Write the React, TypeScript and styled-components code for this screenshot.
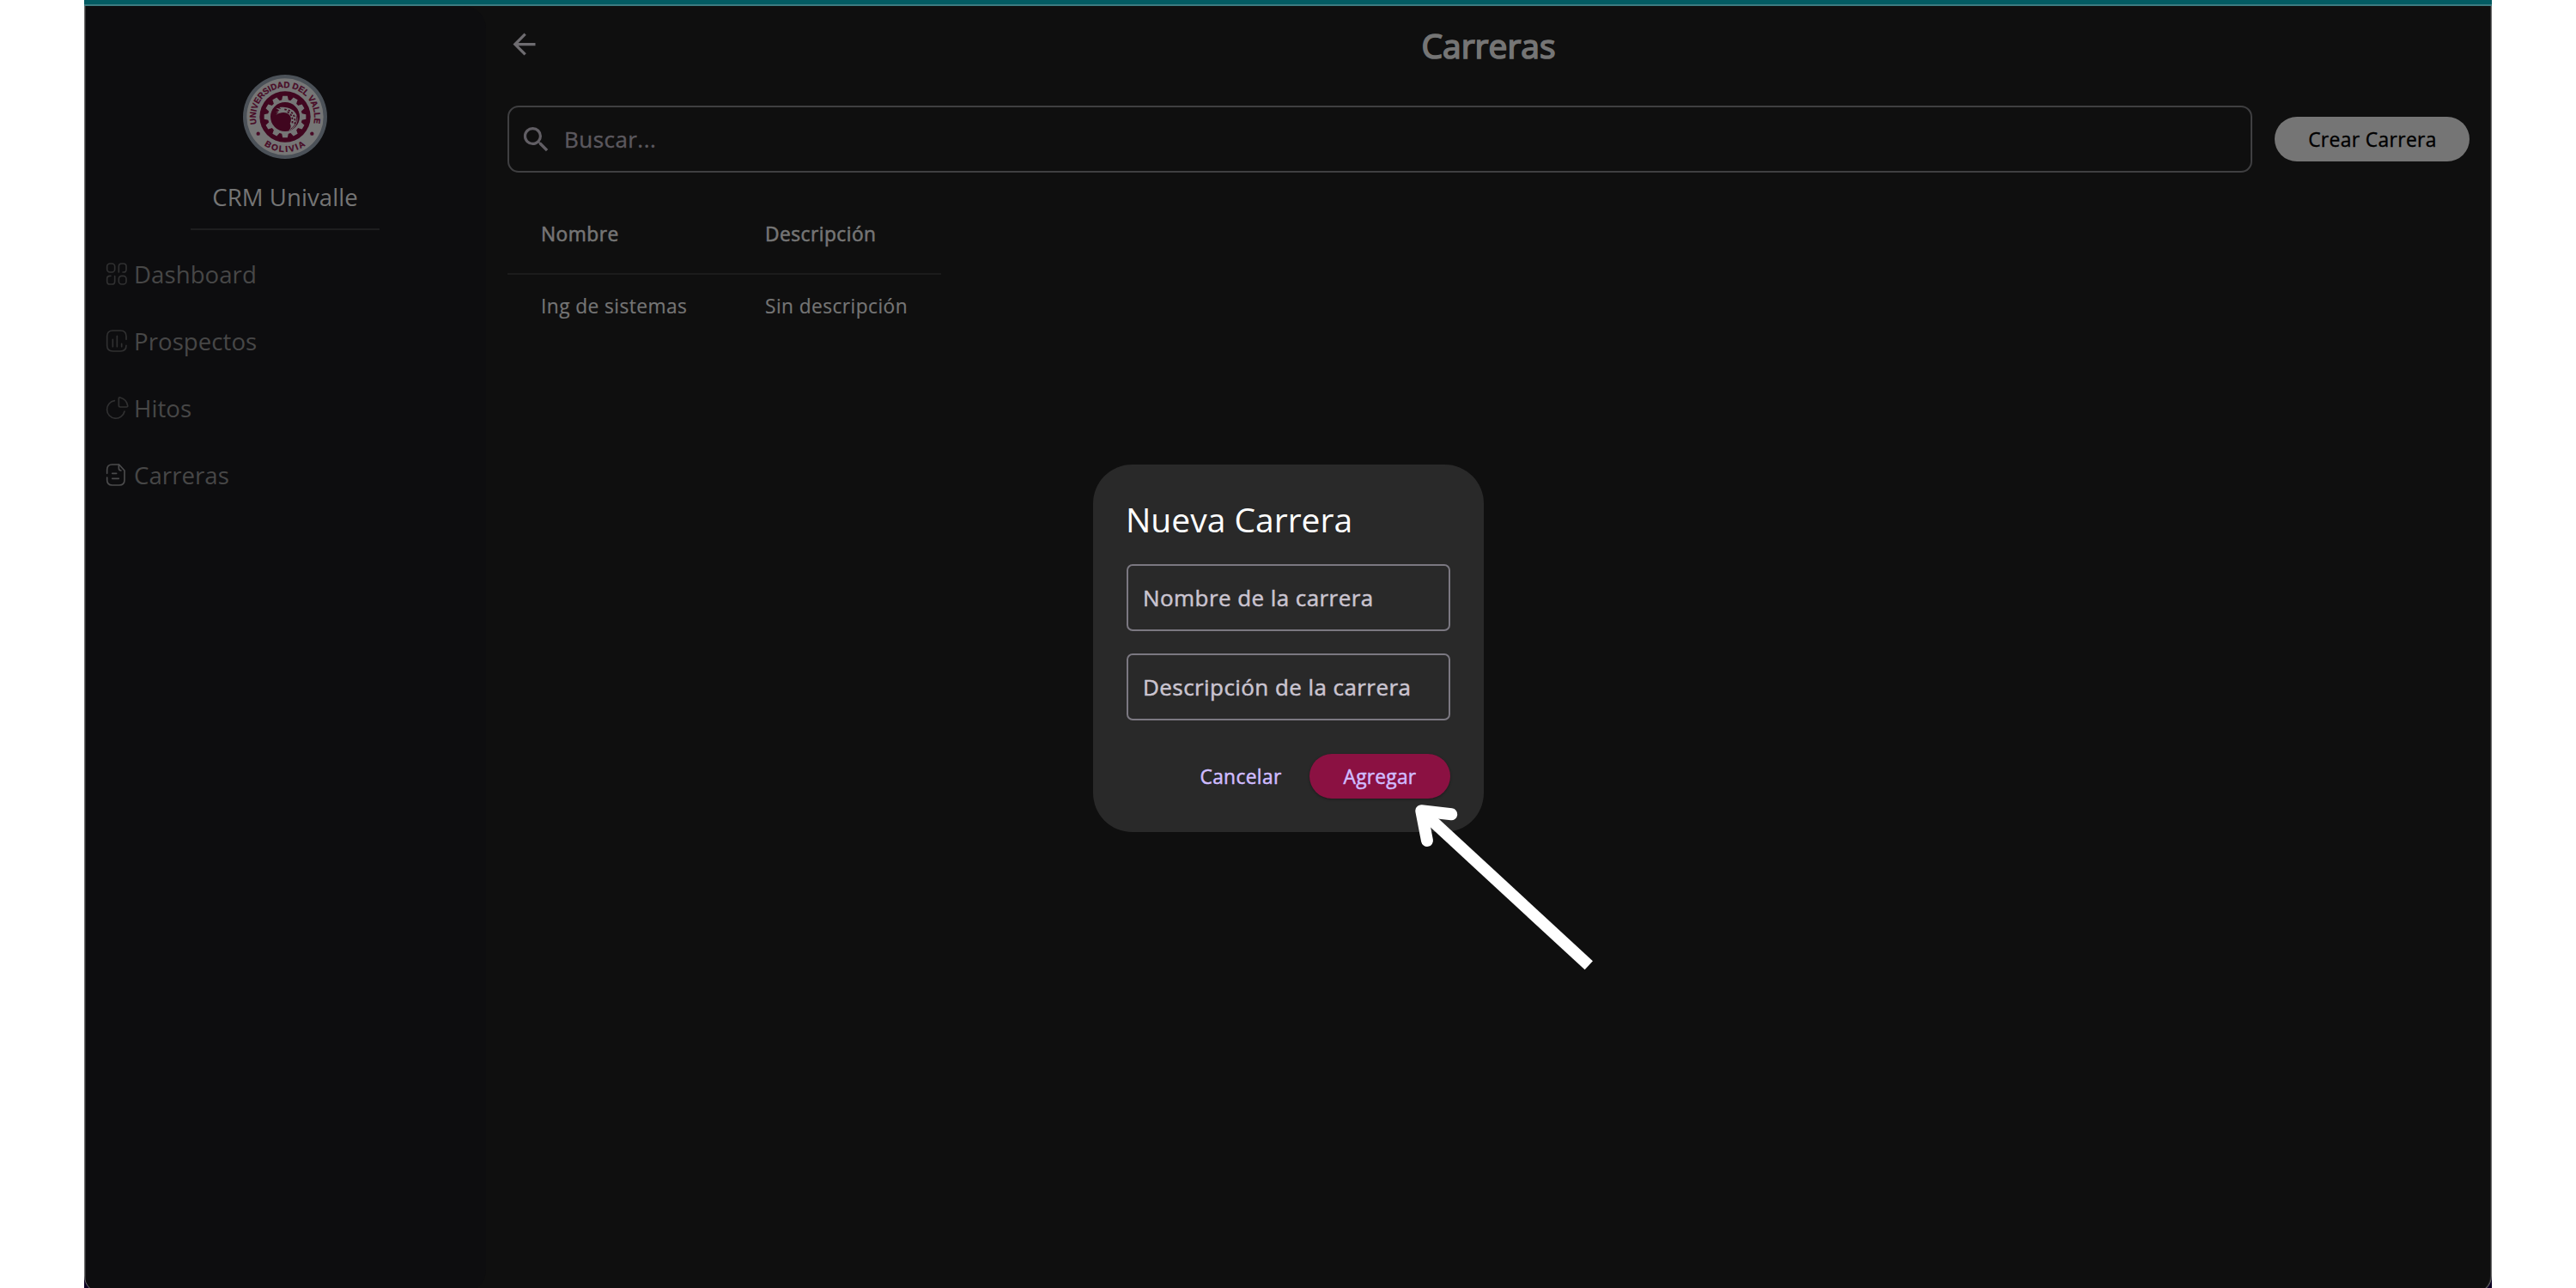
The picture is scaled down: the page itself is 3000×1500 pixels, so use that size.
import React from 'react';
import styled, { createGlobalStyle } from 'styled-components';

const GlobalStyle = createGlobalStyle`
  * { box-sizing: border-box; }
  body {
    margin: 0;
    background: #ffffff;
    font-family: "Open Sans", "Noto Sans", sans-serif;
  }
`;

const Screen = styled.div`
  position: relative;
  width: 3000px;
  height: 1500px;
  padding: 0 98px;
  overflow: hidden;
  background: #ffffff;
`;

const Desktop = styled.div`
  height: 1500px;
  display: flex;
  flex-direction: column;
  overflow: hidden;
  background: #0b0022;
`;

const TopStrip = styled.div`
  flex: none;
  height: 7px;
  background: #035b62;
  border-bottom: 2px solid #3c7c81;
`;

const AppWindow = styled.div`
  flex: none;
  height: 1499px;
  display: flex;
  overflow: hidden;
  background: #0f0f0f;
  border: solid #6a6a6b;
  border-width: 0 1px 1px 1px;
  border-radius: 0 0 20px 20px;
  box-shadow: inset 1px 0 0 #323233, inset -1px 0 0 #2b2b2c;
  padding: 0 1px;
`;

const Sidebar = styled.aside`
  width: 466px;
  flex: none;
  display: flex;
  flex-direction: column;
  background: #0d0d0f;
  border-radius: 0 26px 26px 0;
`;

const Brand = styled.div`
  display: flex;
  flex-direction: column;
  align-items: center;
  height: 273px;
  padding: 80px 2px 0 0;
`;

const BrandName = styled.div`
  margin-top: 26px;
  height: 36px;
  line-height: 36px;
  font-size: 27.6px;
  letter-spacing: 0.05px;
  color: #757575;
`;

const BrandRule = styled.div`
  width: 220px;
  height: 2px;
  margin-top: 19px;
  background: #1e1e1f;
`;

const Nav = styled.nav`
  display: flex;
  flex-direction: column;
`;

const NavItem = styled.a<{ $active?: boolean }>`
  display: flex;
  align-items: center;
  gap: 6px;
  height: 78px;
  padding-left: 22px;
  font-size: 27.6px;
  letter-spacing: 0.05px;
  line-height: 36px;
  color: #474747;

  span {
    margin-top: -1px;
  }

  svg {
    width: 28px;
    height: 28px;
    fill: none;
    stroke: ${p => (p.$active ? '#4b4b4c' : '#303031')};
    stroke-width: 5;
    stroke-linecap: round;
    stroke-linejoin: round;
  }
`;

const Main = styled.main`
  flex: 1;
  display: flex;
  flex-direction: column;
  padding: 0 24px 0 25px;
`;

const Header = styled.header`
  display: grid;
  grid-template-columns: 39px 1fr 39px;
  height: 93px;
  margin-bottom: 23px;
  align-items: center;
`;

const BackIcon = styled.svg`
  width: 39px;
  height: 39px;
  margin-top: -4px;
  fill: #6e6c70;
`;

const PageTitle = styled.h1`
  margin: -1px 0 0;
  text-align: center;
  font-size: 39px;
  font-weight: 400;
  line-height: 54px;
  color: #757575;
  -webkit-text-stroke: 1.7px #757575;
`;

const Toolbar = styled.div`
  display: flex;
  align-items: center;
  gap: 26px;
`;

const SearchBox = styled.div`
  flex: 1;
  height: 78px;
  display: flex;
  align-items: center;
  gap: 13px;
  padding-left: 12px;
  border: 2px solid #3f3f41;
  border-radius: 13px;
  font-size: 26px;
  letter-spacing: 0.45px;
  color: #5b585e;
  -webkit-text-stroke: 0.4px #5b585e;

  svg {
    width: 39px;
    height: 39px;
    fill: #615e64;
  }
`;

const CreateButton = styled.button`
  width: 227px;
  height: 52px;
  padding: 0 0 0 1px;
  border: 0;
  border-radius: 26px;
  background: #757575;
  color: #000000;
  font: 400 22.75px/53px "Open Sans", "Noto Sans", sans-serif;
  letter-spacing: 0.4px;
  -webkit-text-stroke: 0.4px #000000;
`;

const Table = styled.div`
  width: 505px;
  margin-top: 25px;
`;

const TableRow = styled.div<{ $head?: boolean }>`
  display: grid;
  grid-template-columns: 261px 1fr;
  padding-left: 39px;
  height: ${p => (p.$head ? 94 : 73)}px;
  line-height: ${p => (p.$head ? 93 : 73)}px;
  border-bottom: ${p => (p.$head ? '2px solid #1b1b1b' : '0')};
  font-size: 22.75px;
  letter-spacing: ${p => (p.$head ? 0.48 : 0.42)}px;
  color: #757575;
  -webkit-text-stroke: ${p => (p.$head ? 0.6 : 0.2)}px #757575;
`;

const Cell = styled.span`
  white-space: nowrap;
`;

const ModalLayer = styled.div`
  position: absolute;
  left: 1px;
  right: 0;
  top: 7px;
  height: 1496px;
  display: flex;
  align-items: center;
  justify-content: center;
`;

const Dialog = styled.section`
  width: 455px;
  height: 428px;
  padding: 39px;
  display: flex;
  flex-direction: column;
  border-radius: 45.5px;
  background: #292929;
`;

const DialogTitle = styled.h2`
  margin: 0 0 27px;
  font-size: 39px;
  font-weight: 400;
  line-height: 50px;
  letter-spacing: 0;
  text-indent: -1px;
  white-space: nowrap;
  color: #ffffff;
`;

const Field = styled.div`
  height: 78px;
  margin-bottom: 26px;
  padding-left: 17px;
  border: 2px solid #7b7881;
  border-radius: 7px;
  line-height: 74px;
  font-size: 26px;
  letter-spacing: 0.43px;
  white-space: nowrap;
  color: #cac4d0;
  -webkit-text-stroke: 0.5px #cac4d0;
`;

const Actions = styled.div`
  display: flex;
  justify-content: flex-end;
  gap: 13px;
  margin-top: 13px;
`;

const DialogButton = styled.button<{ $primary?: boolean }>`
  height: 52px;
  width: ${p => (p.$primary ? 164 : 134)}px;
  padding: 0;
  border: 0;
  border-radius: 26px;
  background: ${p => (p.$primary ? '#8b1142' : 'transparent')};
  box-shadow: ${p => (p.$primary ? '0 1px 3px rgba(0, 0, 0, 0.35)' : 'none')};
  color: #d0bcff;
  font: 400 22.75px/53px "Open Sans", "Noto Sans", sans-serif;
  letter-spacing: ${p => (p.$primary ? 0.25 : 0.35)}px;
  -webkit-text-stroke: 0.5px #d0bcff;
`;

const Pointer = styled.svg`
  position: absolute;
  left: 1640px;
  top: 930px;
  width: 230px;
  height: 210px;
  fill: none;
  stroke: #ffffff;
`;

const Logo = styled.svg`
  width: 98px;
  height: 98px;
  font-family: "Liberation Sans", Arial, sans-serif;
  font-weight: 700;
`;

const teeth = Array.from({ length: 12 }, (_, i) => i * 30);

function UniversityLogo() {
  return (
    <Logo viewBox="-147 -147 294 294">
      <defs>
        <path id="arc-top" d="M-98.7 26 A102 102 0 1 1 98.7 26" />
        <path id="arc-bottom" d="M-86 88 A123 123 0 0 0 86 88" />
      </defs>
      <circle r="147" fill="#4b5158" />
      <circle r="134" fill="#767676" />
      <circle r="89" fill="#40061f" />
      <g fill="#767676">
        <circle r="60" />
        {teeth.map(a => (
          <path key={a} d="M-12 -56 L-8.5 -73 H8.5 L12 -56 Z" transform={`rotate(${a})`} />
        ))}
      </g>
      <circle r="51" fill="#40061f" />
      <path
        fill="#767676"
        d="M-32 -31 L-14 -27 L-20 -33 C8 -37 34 -27 42 -2 C49 22 33 43 13 49 C21 39 22 31 17 24 C25 8 20 -5 8 -12 C-4 -17 -18 -15 -32 -7 L-22 -17 L-33 -15 L-20 -22 Z"
      />
      <g stroke="#40061f" strokeWidth="5" strokeDasharray="7 6" fill="none">
        <path d="M-2 -26 C25 -24 37 -3 34 25" />
        <path d="M8 -17 C24 -10 29 8 24 27" />
      </g>
      <path d="M19 43 C36 32 44 15 39 -4" stroke="#40061f" strokeWidth="2.5" fill="none" />
      <g fill="#480a26" stroke="#480a26" strokeWidth="0.8" fontSize="30">
        <text textLength="368" lengthAdjust="spacingAndGlyphs">
          <textPath href="#arc-top" startOffset="1" textLength="368" lengthAdjust="spacingAndGlyphs">
            UNIVERSIDAD DEL VALLE
          </textPath>
        </text>
        <text letterSpacing="5.5">
          <textPath href="#arc-bottom" startOffset="51%" textAnchor="middle">
            BOLIVIA
          </textPath>
        </text>
      </g>
      <g fill="#480a26">
        <circle cx="-94" cy="59" r="6.5" />
        <circle cx="94" cy="59" r="6.5" />
      </g>
    </Logo>
  );
}

const DashboardIcon = () => (
  <svg viewBox="0 0 84 84">
    <rect x="8" y="6" width="27" height="30" rx="10" />
    <path d="M49 36 V16 Q49 6 59 6 H65 Q75 6 75 16 V26 Q75 36 65 36 H63" />
    <path d="M21 49 H18 Q8 49 8 59 V68 Q8 78 18 78 H25 Q35 78 35 68 V50" />
    <rect x="49" y="49" width="26" height="29" rx="10" />
  </svg>
);

const ChartIcon = () => (
  <svg viewBox="0 0 84 84">
    <path d="M75 37 V26 Q75 6 55 6 H28 Q8 6 8 26 V58 Q8 78 28 78 H55 Q75 78 75 58" />
    <path d="M28 37 V62 M43 25 V62 M59 52 V62" />
  </svg>
);

const PieIcon = () => (
  <svg viewBox="0 0 84 84">
    <path d="M34 17 A31 31 0 1 0 69 54" />
    <path d="M49 9 Q49 5 54 6 Q76 12 80 34 Q81 39 76 39 H54 Q49 39 49 34 Z" />
  </svg>
);

const DocumentIcon = () => (
  <svg viewBox="0 0 84 84">
    <path d="M8 37 V24 Q8 6 26 6 H50 L69 27 V60 Q69 78 51 78 H26 Q8 78 8 60 V51" />
    <path d="M49 7 V19 Q49 27 57 27 M26 37 H41 M26 55 H49" />
  </svg>
);

const navItems = [
  { label: 'Dashboard', Icon: DashboardIcon },
  { label: 'Prospectos', Icon: ChartIcon },
  { label: 'Hitos', Icon: PieIcon },
  { label: 'Carreras', Icon: DocumentIcon, active: true },
];

export default function App() {
  return (
    <Screen>
      <GlobalStyle />
      <Desktop>
        <TopStrip />
        <AppWindow>
          <Sidebar>
            <Brand>
              <UniversityLogo />
              <BrandName>CRM Univalle</BrandName>
              <BrandRule />
            </Brand>
            <Nav>
              {navItems.map(({ label, Icon, active }) => (
                <NavItem key={label} $active={active}>
                  <Icon />
                  <span>{label}</span>
                </NavItem>
              ))}
            </Nav>
          </Sidebar>
          <Main>
            <Header>
              <BackIcon viewBox="0 0 24 24">
                <path d="M20 11H7.83l5.59-5.59L12 4l-8 8 8 8 1.41-1.41L7.83 13H20v-2z" />
              </BackIcon>
              <PageTitle>Carreras</PageTitle>
            </Header>
            <Toolbar>
              <SearchBox>
                <svg viewBox="0 0 24 24">
                  <path d="M15.5 14h-.79l-.28-.27A6.471 6.471 0 0 0 16 9.5 6.5 6.5 0 1 0 9.5 16c1.61 0 3.09-.59 4.23-1.57l.27.28v.79l5 4.99L20.49 19l-4.99-5zm-6 0C7.01 14 5 11.99 5 9.5S7.01 5 9.5 5 14 7.01 14 9.5 11.99 14 9.5 14z" />
                </svg>
                <span>Buscar...</span>
              </SearchBox>
              <CreateButton>Crear Carrera</CreateButton>
            </Toolbar>
            <Table>
              <TableRow $head>
                <Cell>Nombre</Cell>
                <Cell>Descripción</Cell>
              </TableRow>
              <TableRow>
                <Cell>Ing de sistemas</Cell>
                <Cell>Sin descripción</Cell>
              </TableRow>
            </Table>
          </Main>
        </AppWindow>
      </Desktop>
      <ModalLayer>
        <Dialog>
          <DialogTitle>Nueva Carrera</DialogTitle>
          <Field>Nombre de la carrera</Field>
          <Field>Descripción de la carrera</Field>
          <Actions>
            <DialogButton>Cancelar</DialogButton>
            <DialogButton $primary>Agregar</DialogButton>
          </Actions>
        </Dialog>
      </ModalLayer>
      <Pointer viewBox="1640 930 230 210">
        <path d="M1655.3 944.3 L1850.3 1124.3" strokeWidth="13.8" />
        <path
          d="M1690.3 948.3 L1655.3 944.3 L1662 979"
          strokeWidth="14"
          strokeLinecap="round"
          strokeLinejoin="round"
        />
      </Pointer>
    </Screen>
  );
}
